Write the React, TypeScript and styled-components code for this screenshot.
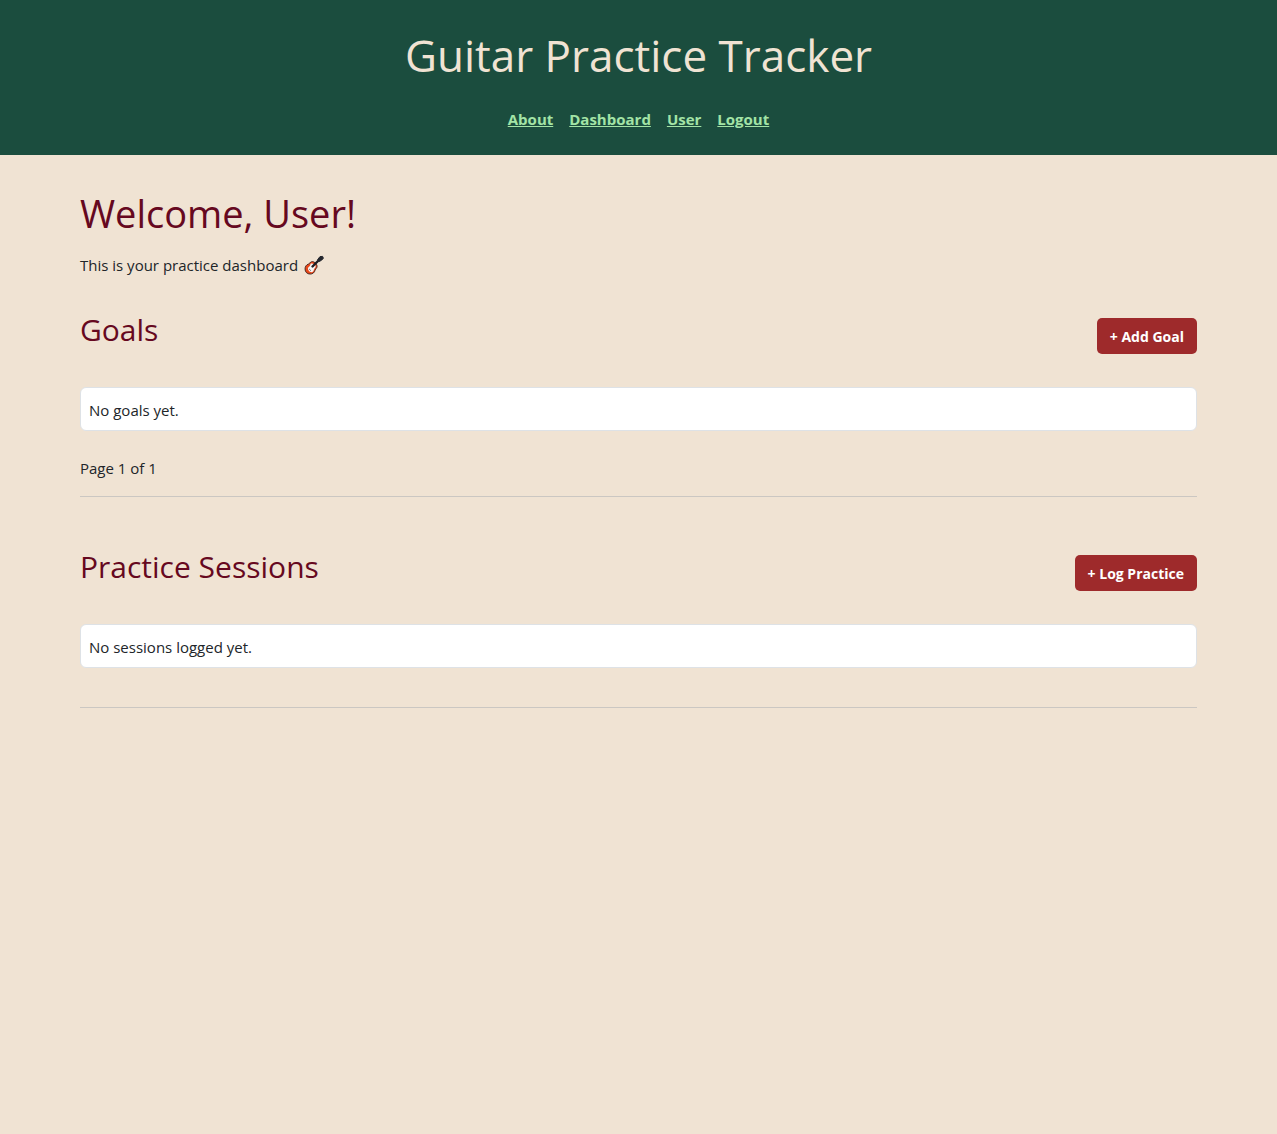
import React from "react";
import styled, { createGlobalStyle } from "styled-components";

const GlobalStyle = createGlobalStyle`
  *, *::before, *::after {
    box-sizing: border-box;
  }

  body {
    margin: 0;
    background: #f0e3d3;
    color: #212529;
    font-family: "Segoe UI", "Open Sans", "Noto Sans", sans-serif;
    font-size: 16px;
    line-height: 24px;
  }
`;

const Header = styled.header`
  display: flex;
  flex-direction: column;
  align-items: center;
  gap: 20px;
  padding: 24px;
  background: #1b4d3e;
`;

const SiteTitle = styled.h1`
  margin: 0;
  color: #f0e3d3;
  font-size: 44px;
  font-weight: 400;
  line-height: 63px;
`;

const Nav = styled.nav`
  display: flex;
  gap: 16px;
`;

const NavLink = styled.a`
  color: #a3e4a6;
  font-size: 15px;
  font-weight: 700;
  text-decoration: underline;
`;

const Main = styled.main`
  max-width: 1300px;
  margin: 0 auto;
  padding: 32px 80px;
`;

const Welcome = styled.h2`
  margin: 0 0 14px;
  color: #660820;
  font-size: 38px;
  font-weight: 400;
  line-height: 52px;
`;

const Intro = styled.p`
  display: flex;
  align-items: center;
  gap: 6px;
  margin: 0 0 33px;
  font-size: 15px;
`;

const GuitarIcon = styled.svg`
  width: 20px;
  height: 20px;
`;

const Section = styled.section`
  margin-bottom: 50px;
  border-bottom: 1px solid #cbc7c2;
`;

const SectionHeader = styled.div`
  display: flex;
  justify-content: space-between;
  align-items: flex-start;
  margin-bottom: 33px;
`;

const SectionTitle = styled.h3`
  margin: 0;
  color: #660820;
  font-size: 30px;
  font-weight: 400;
  line-height: 40px;
`;

const AddButton = styled.button`
  height: 36px;
  margin-top: 8px;
  padding: 1px 13px 0;
  border: 0;
  border-radius: 5px;
  background: #9e2a2b;
  color: #fff;
  font-family: inherit;
  font-size: 14px;
  font-weight: 700;
  cursor: pointer;
`;

const List = styled.ul`
  margin: 0;
  padding: 0;
  list-style: none;
`;

const EmptyItem = styled.li`
  padding: 10px 8px 8px;
  border: 1px solid #dee2e6;
  border-radius: 6px;
  background: #fff;
  font-size: 15px;
`;

const Footer = styled.div`
  min-height: 39px;
`;

const PageCount = styled.p`
  margin: 0;
  padding: 25px 0 16px;
  font-size: 15px;
`;

const links = ["About", "Dashboard", "User", "Logout"];

function Guitar() {
  return (
    <GuitarIcon viewBox="0 0 20 20" role="img" aria-label="guitar">
      <path
        d="M7.500 6.700c-1.300.4-1.700 1.700-3 2.300C2.300 9.700 1 11.600 1 14c0 3 2.300 5.100 5.200 5.100 2.500 0 4.400-1.600 4.900-3.900.3-1.200 1.500-1.700 1.900-3 .4-1.400-.2-2.600-1.200-3.700-1.200-1.300-2.700-2.300-4.300-1.800Z"
        fill="#e8481a"
        stroke="#2a1a1a"
        strokeWidth="0.800"
      />
      <path
        d="M6.600 8.800c1.700-1 3.500.1 4.500 1.300.9 1.100.7 2.200-.4 3.100-1 .8-.7 2.500-1.900 3.500-1.300 1-2.900.3-3.800-.7-.9-1-1.500-2.200-.7-3.400.8-1 2-1.500 2.300-3.800Z"
        fill="#f8f5f3"
      />
      <path d="M8.500 11.500 14.500 5.500" stroke="#1c1d23" strokeWidth="2.400" strokeLinecap="round" />
      <path d="M13.600 4.600 16 1.600 18.600 1.400 19.400 3.200 17.800 5 15.400 6.500Z" fill="#24272e" stroke="#24272e" strokeWidth="1" strokeLinejoin="round" />
      <path d="M5.200 14 6.800 15.600" stroke="#55565e" strokeWidth="1" />
    </GuitarIcon>
  );
}

type PracticeSectionProps = {
  title: string;
  action: string;
  empty: string;
  pages?: string;
};

function PracticeSection({ title, action, empty, pages }: PracticeSectionProps) {
  return (
    <Section>
      <SectionHeader>
        <SectionTitle>{title}</SectionTitle>
        <AddButton type="button">{action}</AddButton>
      </SectionHeader>
      <List>
        <EmptyItem>{empty}</EmptyItem>
      </List>
      <Footer>{pages && <PageCount>{pages}</PageCount>}</Footer>
    </Section>
  );
}

export default function App() {
  return (
    <>
      <GlobalStyle />
      <Header>
        <SiteTitle>Guitar Practice Tracker</SiteTitle>
        <Nav>
          {links.map((link) => (
            <NavLink key={link} href="#">
              {link}
            </NavLink>
          ))}
        </Nav>
      </Header>
      <Main>
        <Welcome>Welcome, User!</Welcome>
        <Intro>
          This is your practice dashboard
          <Guitar />
        </Intro>
        <PracticeSection title="Goals" action="+ Add Goal" empty="No goals yet." pages="Page 1 of 1" />
        <PracticeSection title="Practice Sessions" action="+ Log Practice" empty="No sessions logged yet." />
      </Main>
    </>
  );
}
